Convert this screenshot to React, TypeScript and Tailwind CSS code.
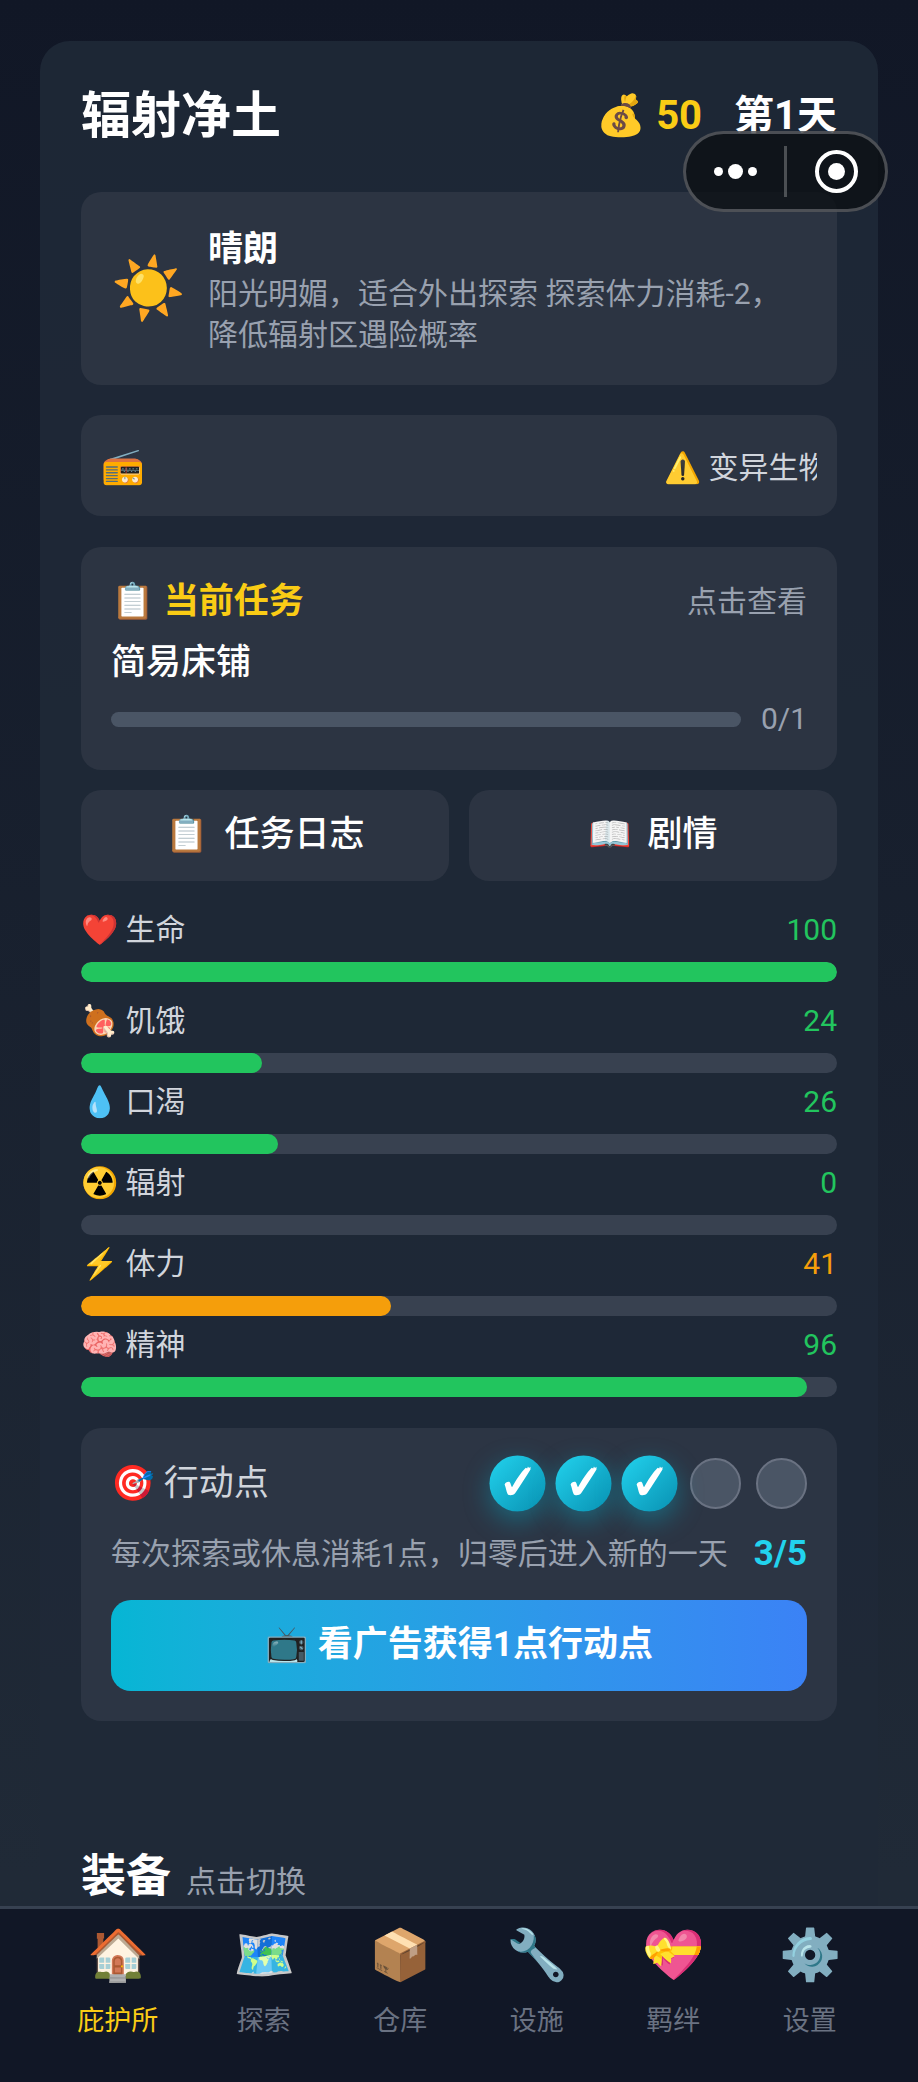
import { useState } from 'react';
import clsx from 'clsx';

interface Stat {
  icon: string;
  label: string;
  value: number;
  warn?: boolean;
}

const stats: Stat[] = [
  { icon: '❤️', label: '生命', value: 100 },
  { icon: '🍖', label: '饥饿', value: 24 },
  { icon: '💧', label: '口渴', value: 26 },
  { icon: '☢️', label: '辐射', value: 0 },
  { icon: '⚡', label: '体力', value: 41, warn: true },
  { icon: '🧠', label: '精神', value: 96 },
];

const tabs = [
  { icon: '🏠', label: '庇护所' },
  { icon: '🗺️', label: '探索' },
  { icon: '📦', label: '仓库' },
  { icon: '🔧', label: '设施' },
  { icon: '💝', label: '羁绊' },
  { icon: '⚙️', label: '设置' },
];

const MAX_POINTS = 5;

function StatRow({ icon, label, value, warn }: Stat) {
  return (
    <div className="first:mb-[10px]">
      <div className="flex justify-between text-[30px] leading-[42px]">
        <span className="text-gray-300">
          {icon} {label}
        </span>
        <span className={warn ? 'text-[#f59e0b]' : 'text-[#22c55e]'}>{value}</span>
      </div>
      <div
        role="progressbar"
        aria-label={label}
        aria-valuenow={value}
        className="mt-[11px] h-5 overflow-hidden rounded-full bg-[#384150]"
      >
        <div
          className={clsx('h-full rounded-full', warn ? 'bg-[#f59e0b]' : 'bg-[#22c55e]')}
          style={{ width: `${value}%` }}
        />
      </div>
    </div>
  );
}

function ActionPoint({ active }: { active: boolean }) {
  if (!active) {
    return <div className="size-[51px] rounded-full border-2 border-gray-500 bg-gray-600" />;
  }
  return (
    <div className="flex size-[51px] scale-110 items-center justify-center rounded-full bg-linear-135 from-[#22d3ee] to-[#0891b2] shadow-[0_8px_24px_rgba(6,182,212,0.4)]">
      <svg viewBox="0 0 51 51" className="size-full" fill="#fff">
        <path d="M13.800 26.500C14 24.500 17.500 23.300 18.500 24.300C19.400 25.300 19.600 27.500 20.500 29C24 22.500 28.500 15.500 33 11.200L34.300 11.800L35 10L36 11.300L37.300 10.300L37.300 12.800C33 20 28.500 26.500 23.500 34.200C22 36.400 17.800 36.900 16.600 35.200C15.300 33 15 29.500 13.800 26.500Z" />
      </svg>
    </div>
  );
}

// 小程序右上角胶囊
function Capsule() {
  return (
    <div className="absolute top-[131px] right-[30px] flex h-[81px] w-[205px] items-center rounded-full border-3 border-white/25 bg-[#0c1014]/80">
      <button aria-label="更多" className="flex h-full flex-1 items-center justify-center gap-[5px]">
        <span className="size-[9px] rounded-full bg-white" />
        <span className="size-[15px] rounded-full bg-white" />
        <span className="size-[9px] rounded-full bg-white" />
      </button>
      <span className="h-[51px] w-[3px] bg-white/25" />
      <button aria-label="关闭" className="flex h-full flex-1 items-center justify-center">
        <span className="flex size-[43px] items-center justify-center rounded-full border-4 border-white">
          <span className="size-[17px] rounded-full bg-white" />
        </span>
      </button>
    </div>
  );
}

export default function App() {
  const [activeTab, setActiveTab] = useState('庇护所');
  const points = 3;

  return (
    <div className="relative flex min-h-screen flex-col bg-linear-to-b from-[#111726] to-[#202a37] to-90% font-['Roboto','Noto_Sans_CJK_SC',sans-serif] text-white">
      <main className="flex grow flex-col px-10 pt-[41px]">
        <section className="grow rounded-t-[30px] bg-[#1f2937]/90 px-[41px] pt-10">
          {/* 标题 */}
          <header className="mb-[41px] flex items-center justify-between leading-[70px]">
            <h1 className="text-[50px] font-bold">辐射净土</h1>
            <div className="flex gap-8 text-[40px] font-bold">
              <span className="text-[#facc15]">💰 50</span>
              <span>第1天</span>
            </div>
          </header>

          {/* 天气 */}
          <div className="flex items-center gap-[22px] rounded-[20px] bg-[#2c3442] p-[30px]">
            <span className="text-[60px] leading-none">☀️</span>
            <div>
              <h2 className="pt-1 text-[35px] leading-[47px] font-bold">晴朗</h2>
              <p className="text-[30px] leading-[41px] text-gray-400">
                阳光明媚，适合外出探索 探索体力消耗-2，降低辐射区遇险概率
              </p>
            </div>
          </div>

          {/* 广播 */}
          <div className="mt-[30px] flex h-[101px] items-center rounded-[20px] bg-[#2c3442] px-5 pt-1">
            <span className="text-[35px]">📻</span>
            <div className="ml-5 flex-1 overflow-hidden">
              <p className="ml-auto w-[153px] text-[30px] whitespace-nowrap text-gray-300">⚠️ 变异生物</p>
            </div>
          </div>

          {/* 当前任务 */}
          <div className="mt-[31px] rounded-[20px] bg-[#2c3442] p-[30px]">
            <div className="flex items-center justify-between leading-[50px]">
              <h2 className="text-[35px] font-bold text-[#facc15]">📋 当前任务</h2>
              <button className="text-[30px] text-gray-400">点击查看</button>
            </div>
            <p className="mt-[11px] text-[35px] leading-[50px] font-medium">简易床铺</p>
            <div className="mt-[10px] flex items-center gap-5">
              <div className="h-[15px] flex-1 rounded-full bg-gray-600" />
              <span className="text-[30px] leading-[42px] text-gray-400">0/1</span>
            </div>
          </div>

          <div className="mt-5 grid grid-cols-2 gap-5 text-[35px] font-medium">
            <button className="flex h-[91px] items-center justify-center gap-[15px] rounded-[20px] bg-[#2c3442]">
              <span>📋</span>
              <span>任务日志</span>
            </button>
            <button className="flex h-[91px] items-center justify-center gap-[15px] rounded-[20px] bg-[#2c3442]">
              <span>📖</span>
              <span>剧情</span>
            </button>
          </div>

          {/* 状态条 */}
          <div className="mt-7 flex flex-col gap-2">
            {stats.map((stat) => (
              <StatRow key={stat.label} {...stat} />
            ))}
          </div>

          {/* 行动点 */}
          <div className="mt-[31px] rounded-[20px] bg-[#2c3544] p-[30px]">
            <div className="flex items-center justify-between">
              <h2 className="text-[35px] leading-[51px] text-gray-300">🎯 行动点</h2>
              <div className="flex gap-[15px]">
                {Array.from({ length: MAX_POINTS }, (_, i) => (
                  <ActionPoint key={i} active={i < points} />
                ))}
              </div>
            </div>
            <div className="mt-5 flex items-center justify-between leading-[50px] whitespace-nowrap">
              <span className="text-[30px] text-gray-400">每次探索或休息消耗1点，归零后进入新的一天</span>
              <span className="text-[35px] font-bold text-[#22d3ee]">
                {points}/{MAX_POINTS}
              </span>
            </div>
            <button className="mt-[21px] h-[91px] w-full rounded-[20px] bg-linear-to-r from-[#06b6d4] to-[#3b82f6] text-[35px] font-bold">
              📺 看广告获得1点行动点
            </button>
          </div>

          {/* 装备 */}
          <div className="mt-[129px] flex items-baseline gap-[15px]">
            <h2 className="text-[45px] leading-[54px] font-bold">装备</h2>
            <span className="text-[30px] leading-none text-gray-400">点击切换</span>
          </div>
        </section>
      </main>

      <nav className="flex h-[176px] justify-around border-t-3 border-[#374151] bg-[#111726] px-10 pt-4">
        {tabs.map((tab) => (
          <button
            key={tab.label}
            onClick={() => setActiveTab(tab.label)}
            className="flex flex-col items-center gap-4"
          >
            <span className="text-[50px] leading-[60px]">{tab.icon}</span>
            <span
              className={clsx(
                'text-[27px] leading-[40px]',
                activeTab === tab.label ? 'text-[#facc15]' : 'text-gray-500'
              )}
            >
              {tab.label}
            </span>
          </button>
        ))}
      </nav>

      <Capsule />
    </div>
  );
}
